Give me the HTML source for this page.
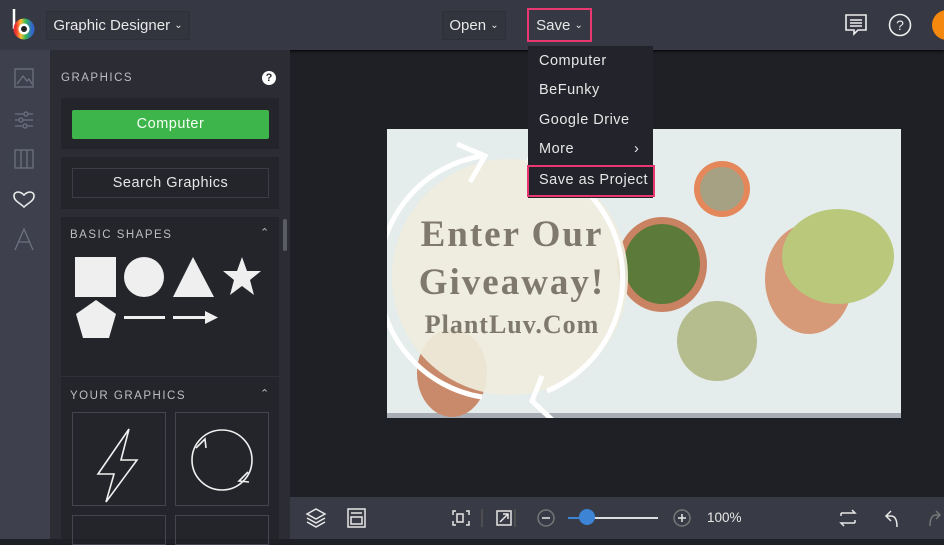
<!DOCTYPE html>
<html><head><meta charset="utf-8"><style>
*{box-sizing:border-box;margin:0;padding:0}
body{width:944px;height:539px;overflow:hidden;background:#1f2026;font-family:"Liberation Sans",sans-serif;color:#e6e6e6;position:relative}
.abs{position:absolute}
.top{left:0;top:0;width:944px;height:50px;background:#363843;box-shadow:0 1px 3px #000}
.btn{position:absolute;border:1px solid #2e3039;background:#32343e;font-size:15px;color:#e8e8e8;display:flex;align-items:center;justify-content:center}
.rail{left:0;top:50px;width:50px;height:489px;background:#3e414d}
.panel{left:50px;top:50px;width:240px;height:489px;background:#2b2c34}
.card{position:absolute;background:#24252b}
.lbl{font-size:11.5px;letter-spacing:1.5px;color:#bdbdc2}
.menu{left:528px;top:46px;width:125px;height:152px;background:#23242b;font-size:14.5px;letter-spacing:.5px}
.menu div{position:absolute;left:11px}
.bot{left:290px;top:497px;width:654px;height:42px;background:#383a45}
</style></head><body>
<div class="abs top"></div>
<svg class="abs" style="left:10px;top:7px" width="28" height="34" viewBox="0 0 28 34"><path d="M4 2v20" stroke="#fff" stroke-width="2.5"/><circle cx="14" cy="22" r="10" fill="#fff"/><circle cx="14" cy="22" r="8" fill="none" stroke="url(#g)" stroke-width="5"/><defs><linearGradient id="g"><stop offset="0" stop-color="#e33"/><stop offset=".3" stop-color="#fb3"/><stop offset=".6" stop-color="#3b5"/><stop offset="1" stop-color="#36c"/></linearGradient></defs><circle cx="14" cy="22" r="3" fill="#222"/></svg>
<div class="btn" style="left:46px;top:11px;width:144px;height:29px">Graphic Designer&nbsp;<span style="font-size:10px">⌄</span></div>
<div class="btn" style="left:442px;top:11px;width:64px;height:29px">Open&nbsp;<span style="font-size:10px">⌄</span></div>
<div class="btn" style="left:527px;top:8px;width:65px;height:34px;border:2px solid #e8386f;background:#363843">Save&nbsp;<span style="font-size:10px">⌄</span></div>
<svg class="abs" style="left:844px;top:13px" width="24" height="24" viewBox="0 0 24 24" fill="none" stroke="#eee" stroke-width="1.6"><path d="M2 2h20v15H14l-4 4v-4H2z"/><path d="M6 7h12M6 10h12M6 13h12"/></svg>
<svg class="abs" style="left:888px;top:13px" width="24" height="24" viewBox="0 0 24 24" fill="none" stroke="#eee" stroke-width="1.6"><circle cx="12" cy="12" r="10.5"/><text x="12" y="17" text-anchor="middle" font-size="14" fill="#eee" stroke="none" font-family="Liberation Sans">?</text></svg>
<div class="abs" style="left:932px;top:10px;width:30px;height:30px;border-radius:50%;background:#f5890f"></div>

<div class="abs rail"></div>
<svg class="abs" style="left:13px;top:68px" width="22" height="190" viewBox="0 0 22 190" fill="none" stroke="#6d7080" stroke-width="1.3"><rect x="2" y="1" width="18" height="18"/><path d="M4 16l6-8 4 5 2-2 3 5"/><path d="M2 46h18M2 52h18M2 58h18"/><circle cx="13" cy="46" r="2" fill="#3e414d"/><circle cx="8" cy="52" r="2" fill="#3e414d"/><circle cx="12" cy="58" r="2" fill="#3e414d"/><rect x="2" y="82" width="18" height="18"/><path d="M8 82v18M14 82v18"/><path d="M11 139c-4-4-10-6-10-11 0-4 5-6 10-1 5-5 10-3 10 1 0 5-6 7-10 11z" stroke="#e8e8e8" stroke-width="1.6"/><path d="M2 182l9-21 9 21M5 174h12"/></svg>

<div class="abs panel"></div>
<div class="abs lbl" style="left:61px;top:72px">GRAPHICS</div>
<div class="abs" style="left:262px;top:71px;width:14px;height:14px;border-radius:50%;background:#fff;color:#2b2c34;font-size:11px;font-weight:bold;text-align:center;line-height:14px">?</div>
<div class="card" style="left:61px;top:98px;width:218px;height:51px"></div>
<div class="abs" style="left:72px;top:110px;width:197px;height:29px;background:#3db54a;border-radius:2px;font-size:14.5px;text-align:center;line-height:29px;color:#f4fff4;letter-spacing:.5px">Computer</div>
<div class="card" style="left:61px;top:157px;width:218px;height:52px"></div>
<div class="abs" style="left:72px;top:168px;width:197px;height:30px;border:1px solid #3c3e47;font-size:14.5px;text-align:center;line-height:28px;letter-spacing:.5px">Search Graphics</div>
<div class="card" style="left:61px;top:217px;width:218px;height:322px"></div>
<div class="abs" style="left:61px;top:376px;width:218px;height:1px;background:#2f3038"></div>
<div class="abs lbl" style="left:70px;top:229px">BASIC SHAPES</div>
<div class="abs lbl" style="left:70px;top:390px">YOUR GRAPHICS</div>
<div class="abs" style="left:260px;top:226px;font-size:11px;color:#bbb">⌃</div>
<div class="abs" style="left:260px;top:387px;font-size:11px;color:#bbb">⌃</div>
<div class="abs" style="left:283px;top:219px;width:4px;height:32px;border-radius:2px;background:#5a5c66"></div>
<svg class="abs" style="left:70px;top:250px" width="200" height="100" viewBox="0 0 200 100" fill="#efefef"><rect x="5" y="7" width="41" height="40"/><circle cx="74" cy="27" r="20"/><path d="M103 47l20-40 21 40z"/><path d="M172 7l5 14h14l-11 9 4 15-12-9-12 9 4-15-11-9h14z"/><path d="M26 50l20 14-7 24H13L6 64z"/><rect x="54" y="66" width="41" height="3"/><path d="M103 66h32v-5l13 6.5-13 6.5v-5h-32z"/></svg>
<div class="abs" style="left:72px;top:412px;width:94px;height:94px;border:1px solid #44464f"></div>
<div class="abs" style="left:175px;top:412px;width:94px;height:94px;border:1px solid #44464f"></div>
<div class="abs" style="left:72px;top:515px;width:94px;height:30px;border:1px solid #44464f"></div>
<div class="abs" style="left:175px;top:515px;width:94px;height:30px;border:1px solid #44464f"></div>
<svg class="abs" style="left:72px;top:412px" width="200" height="94" fill="none" stroke="#f0f0f0" stroke-width="1.6"><path d="M57 17L26 62h16l-8 28 31-42H49z"/><circle cx="150" cy="48" r="30"/><path d="M124 36l9-9 1 9M176 60l-9 9 10 1"/></svg>

<div class="abs" style="left:387px;top:129px;width:514px;height:289px;background:#e5ecec;overflow:hidden">
<div class="abs" style="left:0;top:284px;width:514px;height:5px;background:#a8adb5"></div>
<div class="abs" style="left:307px;top:32px;width:56px;height:56px;border-radius:50%;background:#e4875a"></div>
<div class="abs" style="left:313px;top:38px;width:44px;height:44px;border-radius:50%;background:#a7a184"></div>
<div class="abs" style="left:230px;top:88px;width:90px;height:95px;border-radius:50%;background:#c98363"></div>
<div class="abs" style="left:237px;top:95px;width:76px;height:80px;border-radius:50%;background:#5c7a3a"></div>
<div class="abs" style="left:378px;top:95px;width:88px;height:110px;border-radius:50%;background:#d79a78"></div>
<div class="abs" style="left:395px;top:80px;width:112px;height:95px;border-radius:50%;background:#b9c87a"></div>
<div class="abs" style="left:290px;top:172px;width:80px;height:80px;border-radius:50%;background:#b5bc8d"></div>
<div class="abs" style="left:30px;top:200px;width:70px;height:88px;border-radius:50%;background:#c88a6a"></div>
<div class="abs" style="left:5px;top:30px;width:236px;height:236px;border-radius:50%;background:#efeddd;opacity:.92"></div>
<svg class="abs" style="left:0;top:0" width="270" height="289" fill="none" stroke="#fff" stroke-width="5"><path d="M95 27A122 122 0 0 0 95 268"/><path d="M160 262A122 122 0 0 0 140 30"/><path d="M70 15l28 12-15 26M175 300l-30-28 10-25"/></svg>
<div class="abs" style="left:0;top:82px;width:250px;text-align:center;font-family:'Liberation Serif',serif;font-weight:bold;color:#7f786c;font-size:37px;line-height:48px;letter-spacing:2px">Enter Our<br>Giveaway!</div>
<div class="abs" style="left:0;top:181px;width:250px;text-align:center;font-family:'Liberation Serif',serif;font-weight:bold;color:#7f786c;font-size:26px;letter-spacing:1px">PlantLuv.Com</div>
</div>

<div class="abs menu">
<div style="top:7px">Computer</div>
<div style="top:36px">BeFunky</div>
<div style="top:66px">Google Drive</div>
<div style="top:95px">More</div><div style="top:95px;left:106px">›</div>
</div>
<div class="abs" style="left:527px;top:165px;width:128px;height:32px;border:2px solid #e8386f;background:#23242b;font-size:14.5px;letter-spacing:.5px;padding:5px 0 0 10px">Save as Project</div>

<div class="abs bot"></div>
<svg class="abs" style="left:290px;top:497px" width="654" height="42" fill="none" stroke="#e8e8e8" stroke-width="1.5"><path d="M17 17l9-5 9 5-9 5zM17 21l9 5 9-5M17 25l9 5 9-5"/><rect x="58" y="12" width="17" height="18"/><path d="M61 16h11M61 20h11v7H61z"/><path d="M166 14h-3v4M176 14h3v4M166 28h-3v-4M176 28h3v-4"/><rect x="167" y="17" width="6" height="8"/><path d="M192 12v18" stroke="#555"/><rect x="207" y="14" width="14" height="14"/><path d="M210 25l8-8M213 17h5v5"/><path d="M225 12v18" stroke="#555"/><circle cx="256" cy="21" r="8" stroke="#777"/><path d="M252 21h8"/><path d="M278 21h90" stroke="#ddd" stroke-width="2"/><path d="M278 21h20" stroke="#3d84d4" stroke-width="2"/><circle cx="392" cy="21" r="8" stroke="#777"/><path d="M388 21h8M392 17v8"/><path d="M551 16h14l-3-3M565 26h-14l3 3M551 16v3M565 26v-3"/><path d="M601 14l-5 5 5 5M596 19h5c4 0 6 4 6 11"/><path d="M646 14l4 4-4 4M650 18h-4c-4 0-6 4-6 11" stroke="#777"/></svg>
<div class="abs" style="left:579px;top:509px;width:16px;height:16px;border-radius:50%;background:#3d84d4"></div>
<div class="abs" style="left:707px;top:510px;font-size:13.5px;color:#e8e8e8">100%</div>
</body></html>
